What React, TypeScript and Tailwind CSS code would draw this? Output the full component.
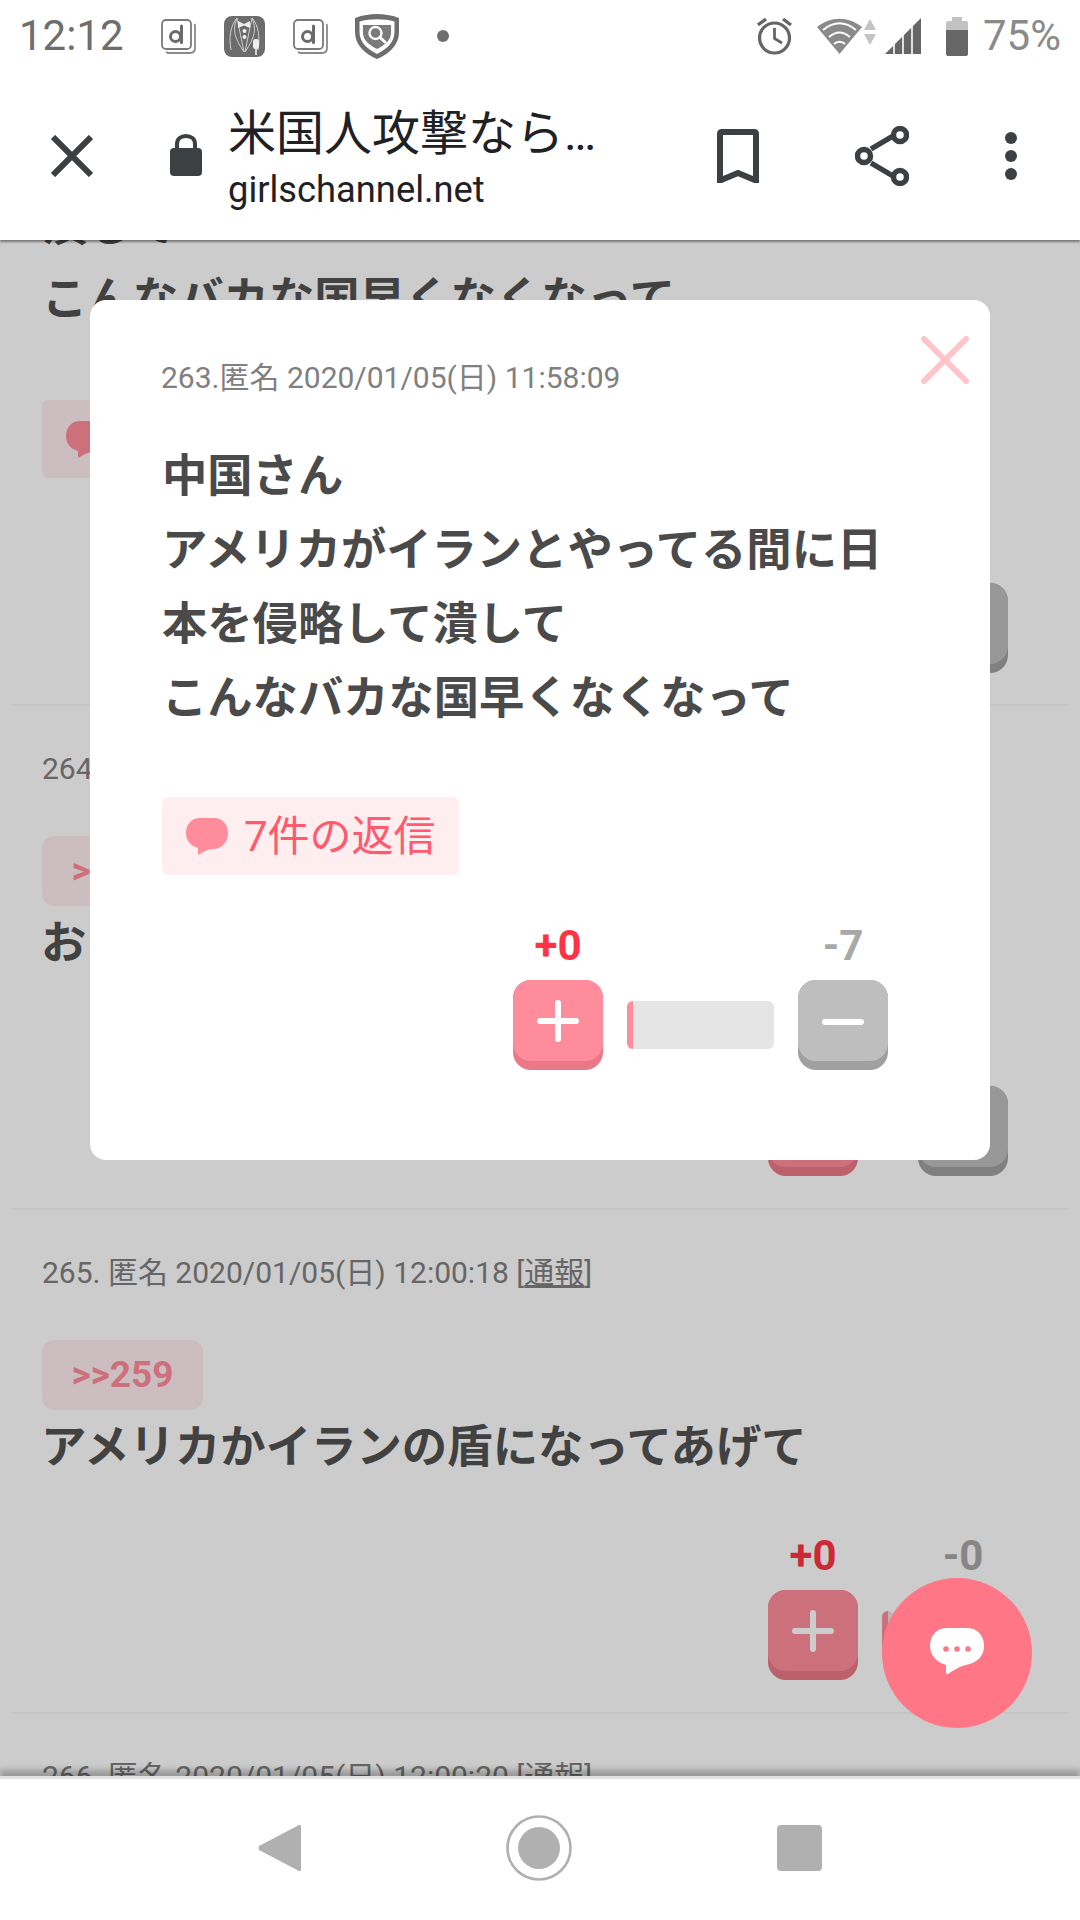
const FONT = "font-['Roboto','Noto_Sans_CJK_JP',sans-serif]";

function DIcon() {
  return (
    <svg width="35" height="35" viewBox="0 0 35 35" fill="none" className="shrink-0">
      <path d="M33.5 5Q34 6 34 8V29Q34 34 29 34H9Q6 34 5 33" stroke="#8a8a8a" strokeWidth="1.8" />
      <rect x="1" y="1" width="29" height="29" rx="4" fill="#fff" stroke="#7a7a7a" strokeWidth="1.8" />
      <circle cx="14.5" cy="17.5" r="5" stroke="#6a6a6a" strokeWidth="3" />
      <path d="M20.5 7V23.5" stroke="#6a6a6a" strokeWidth="3" strokeLinecap="round" />
    </svg>
  );
}

function TuxIcon() {
  return (
    <svg width="41" height="41" viewBox="0 0 41 41" fill="none" className="shrink-0">
      <rect width="41" height="41" rx="8" fill="#6c6c6c" />
      <path d="M13 2C6 10 5 22 7 34M28 2C35 10 36 22 34 34M13 2L20 36M28 2L21 36M13 2C9 12 9 20 20 36M28 2C32 12 32 20 21 36" stroke="#d8d8d8" strokeWidth="0.9" />
      <path d="M14 5L20 8L26 5V12L20 9.5L14 12Z" fill="#eee" />
      <circle cx="20.5" cy="15" r="2" fill="#eee" />
      <circle cx="20.5" cy="21" r="2" fill="#eee" />
      <rect x="29" y="23" width="6" height="10" rx="2.5" fill="#eee" />
      <path d="M32 33V39" stroke="#eee" strokeWidth="1.6" />
    </svg>
  );
}

function ShieldIcon() {
  return (
    <svg width="44" height="45" viewBox="0 0 44 45" fill="none" className="shrink-0">
      <path d="M22 0C29 0 36 1 44 4V18C44 31 34 40 22 45C10 40 0 31 0 18V4C8 1 15 0 22 0Z" fill="#6e6e6e" />
      <path d="M4.5 7.5C15 4.5 29 4.5 39.5 7.5V18C39.5 28 32 35 22 40C12 35 4.5 28 4.5 18Z" fill="#fff" />
      <path d="M8 11H36V19C36 26 30 31 22 35C14 31 8 26 8 19Z" fill="#7a7a7a" />
      <circle cx="20.5" cy="19" r="6" fill="#7a7a7a" stroke="#fff" strokeWidth="2.4" />
      <path d="M25 23.5L30 28" stroke="#fff" strokeWidth="3" strokeLinecap="round" />
    </svg>
  );
}

function StatusBar() {
  return (
    <div className="h-[72px] shrink-0 bg-white flex items-center pl-[19px] pr-[19px]">
      <span className="text-[42px] leading-none text-[#6e6e6e] w-[142px]">12:12</span>
      <DIcon />
      <div className="w-[28px]" />
      <TuxIcon />
      <div className="w-[28px]" />
      <DIcon />
      <div className="w-[27px]" />
      <ShieldIcon />
      <div className="w-[38px]" />
      <div className="w-[12px] h-[12px] rounded-full bg-[#6e6e6e]" />
      <div className="flex-1" />
      <svg width="35" height="38" viewBox="0 0 35 38" fill="none" className="shrink-0">
        <circle cx="17.5" cy="21" r="15" stroke="#666" strokeWidth="3.2" />
        <path d="M17.5 11V21.5L25 26" stroke="#666" strokeWidth="2.8" />
        <path d="M1 8L9 2M34 8L26 2" stroke="#666" strokeWidth="3.4" />
      </svg>
      <div className="w-[25px]" />
      <svg width="59" height="38" viewBox="0 0 59 38" className="shrink-0">
        <path d="M22.5 37L0 10C14 -1 31 -1 45 10Z" fill="#8a8a8a" />
        <path d="M6 13C17 4 28 4 39 13M12 20C19 14 26 14 33 20M17 27C20 24 25 24 28 27" stroke="#fff" strokeWidth="2" fill="none" />
        <path d="M53 2L59 13H47Z M53 28L47 17H59Z" fill="#c4c4c4" />
      </svg>
      <div className="w-[9px]" />
      <svg width="36" height="36" viewBox="0 0 36 36" className="shrink-0">
        <path d="M36 0V36H0Z" fill="#666" />
        <path d="M9 24V36M18 15V36M27 6V36" stroke="#fff" strokeWidth="1.6" />
      </svg>
      <div className="w-[25px]" />
      <svg width="22" height="39" viewBox="0 0 22 39" className="shrink-0">
        <path d="M6 0H16V4H20Q22 4 22 6V13H0V6Q0 4 2 4H6Z" fill="#c2c2c2" />
        <path d="M0 13H22V37Q22 39 20 39H2Q0 39 0 37Z" fill="#666" />
      </svg>
      <span className="text-[42px] leading-none text-[#8a8a8a] ml-[15px]">75%</span>
    </div>
  );
}

function Toolbar() {
  return (
    <div className="h-[168px] shrink-0 bg-white flex items-center relative z-20 shadow-[0_2px_2px_rgba(0,0,0,0.4)]">
      <svg width="42" height="42" viewBox="0 0 42 42" className="ml-[51px] shrink-0" fill="none">
        <path d="M2 2L40 40M40 2L2 40" stroke="#3c4043" strokeWidth="6" />
      </svg>
      <svg width="32" height="42" viewBox="0 0 32 42" className="ml-[77px] shrink-0 mt-[-2px]">
        <path d="M7 15V10C7 5 11 2 16 2C21 2 25 5 25 10V15" fill="none" stroke="#3c4043" strokeWidth="4" />
        <rect y="14" width="32" height="28" rx="4" fill="#3c4043" />
      </svg>
      <div className="ml-[26px] w-[421px] flex flex-col mt-[4px]">
        <span className="text-[48px] leading-[60px] text-[#202124] whitespace-nowrap">米国人攻撃なら…</span>
        <span className="text-[36.3px] leading-[44px] text-[#202124] mt-[4px]">girlschannel.net</span>
      </div>
      <svg width="42" height="54" viewBox="0 0 42 54" className="ml-[68px] shrink-0 mt-[-1px]" fill="none">
        <path d="M3 51.5V5Q3 3 5 3H37Q39 3 39 5V51.5L21 44Z" stroke="#3c4043" strokeWidth="6" />
      </svg>
      <svg width="54" height="60" viewBox="0 0 54 60" className="ml-[96px] shrink-0" fill="none" stroke="#3c4043" strokeWidth="5.5">
        <path d="M16 23L38 10M16 37L38 50" />
        <circle cx="9" cy="30" r="6.5" />
        <circle cx="45" cy="9" r="6.5" />
        <circle cx="45" cy="51" r="6.5" />
      </svg>
      <div className="ml-[96px] flex flex-col gap-[6px] shrink-0">
        <div className="w-[12px] h-[12px] rounded-full bg-[#3c4043]" />
        <div className="w-[12px] h-[12px] rounded-full bg-[#3c4043]" />
        <div className="w-[12px] h-[12px] rounded-full bg-[#3c4043]" />
      </div>
    </div>
  );
}

function Bubble({ fill, size = 42 }: { fill: string; size?: number }) {
  return (
    <svg width={size} height={Math.round((size * 37) / 42)} viewBox="0 0 42 37" className="shrink-0">
      <path d="M14 0H28C36 0 42 6 42 15C42 24 36 31 27 31C23 31 18 33 13 36.5C12 37 12 36 12 33V30C5 28 0 23 0 15C0 6 6 0 14 0Z" fill={fill} />
    </svg>
  );
}

function Votes({ plus, minus, fill, bar }: { plus: string; minus: string; fill: number; bar: number }) {
  return (
    <div className="flex items-end justify-end gap-[24px] font-bold">
      <div className="flex flex-col items-center">
        <span className="text-[42px] leading-[44px] text-[#ff3344]">{plus}</span>
        <div className="mt-[12px] w-[90px] h-[90px] rounded-[18px] bg-[#eb7886]">
          <div className="h-[81px] rounded-[18px] bg-[#ff8c9a] flex items-center justify-center">
            <svg width="42" height="42" viewBox="0 0 42 42" stroke="#fff" strokeWidth="6" strokeLinecap="round">
              <path d="M3 21H39M21 3V39" />
            </svg>
          </div>
        </div>
      </div>
      <div className="mb-[21px] h-[48px] rounded-[6px] bg-[#e5e5e5] overflow-hidden" style={{ width: bar }}>
        <div className="h-full bg-[#ff8c9a]" style={{ width: fill }} />
      </div>
      <div className="flex flex-col items-center">
        <span className="text-[42px] leading-[44px] text-[#a8a8a8]">{minus}</span>
        <div className="mt-[12px] w-[90px] h-[90px] rounded-[18px] bg-[#a0a0a0]">
          <div className="h-[81px] rounded-[18px] bg-[#bebebe] flex items-center justify-center">
            <svg width="42" height="8" viewBox="0 0 42 8" stroke="#fff" strokeWidth="6" strokeLinecap="round" className="mt-[3px]">
              <path d="M3 4H39" />
            </svg>
          </div>
        </div>
      </div>
    </div>
  );
}

function Comment({ meta, anchor, text }: { meta: string; anchor: string; text: string }) {
  return (
    <div className="h-[504px] mx-[12px] px-[30px] pt-[43px] border-b-[2px] border-[#f5f5f5]">
      <div className="text-[30px] leading-[40px] text-[#808080] whitespace-nowrap">
        {meta} [<span className="underline">通報</span>]
      </div>
      <div className="mt-[47px] w-[161px] h-[70px] rounded-[12px] bg-[#ffeef0] flex items-center justify-center text-[37px] font-bold text-[#ff8c9a]">
        {anchor}
      </div>
      <div className="mt-[1px] -ml-[1px] h-[74px] text-[45.4px] leading-[74px] font-bold text-[#525252] whitespace-nowrap">{text}</div>
      <div className="mt-[49px] pr-[30px]">
        <Votes plus="+0" minus="-0" fill={6} bar={12} />
      </div>
    </div>
  );
}

function PageBehind() {
  return (
    <div className="bg-white -mt-[51px]">
      <div className="h-[517px] mx-[12px] px-[30px] border-b-[2px] border-[#f5f5f5]">
        <div className="text-[45.4px] leading-[74px] font-bold text-[#525252] whitespace-nowrap">潰して</div>
        <div className="text-[45.4px] leading-[74px] font-bold text-[#525252] whitespace-nowrap">こんなバカな国早くなくなって</div>
        <div className="mt-[63px] w-[297px] h-[78px] rounded-[6px] bg-[#ffeef0] flex items-center gap-[16px] pl-[24px] text-[42px] text-[#ff5a6e]">
          <Bubble fill="#ff8c9a" />
          7件の返信
        </div>
        <div className="mt-[49px] pr-[30px]">
          <Votes plus="+0" minus="-7" fill={6} bar={12} />
        </div>
      </div>
      <Comment meta="264. 匿名 2020/01/05(日) 11:59:40" anchor=">>263" text="おいおいこの人ヤバいよ" />
      <Comment meta="265. 匿名 2020/01/05(日) 12:00:18" anchor=">>259" text="アメリカかイランの盾になってあげて" />
      <Comment meta="266. 匿名 2020/01/05(日) 12:00:20" anchor=">>263" text="" />
    </div>
  );
}

function Modal() {
  return (
    <div className="relative w-[900px] h-[860px] bg-white rounded-[16px] pt-[58px] pl-[72px] pr-[102px]">
      <svg width="48" height="48" viewBox="0 0 48 48" className="absolute top-[36px] right-[21px]" stroke="#ffc4ca" strokeWidth="6" strokeLinecap="round">
        <path d="M3 3L45 45M45 3L3 45" />
      </svg>
      <div className="-ml-[1px] text-[30px] leading-[40px] text-[#808080] whitespace-nowrap">263.匿名 2020/01/05(日) 11:58:09</div>
      <div className="mt-[42px] text-[45.3px] leading-[74px] font-bold text-[#4a4a4a] whitespace-nowrap">
        中国さん
        <br />
        アメリカがイランとやってる間に日
        <br />
        本を侵略して潰して
        <br />
        こんなバカな国早くなくなって
      </div>
      <div className="mt-[61px] w-[297px] h-[78px] rounded-[6px] bg-[#ffeef0] flex items-center gap-[16px] pl-[24px] text-[42px] text-[#ff5a6e]">
        <Bubble fill="#ff8c9a" />
        7件の返信
      </div>
      <div className="mt-[49px]">
        <Votes plus="+0" minus="-7" fill={6} bar={147} />
      </div>
    </div>
  );
}

function Fab() {
  return (
    <div className="absolute left-[882px] top-[1338px] w-[150px] h-[150px] rounded-full bg-[#ff7686] flex items-center justify-center z-10">
      <svg width="54" height="47" viewBox="0 0 54 47" className="-mt-[4px]">
        <path d="M17 0H37C47 0 54 7 54 18C54 29 46 35 36 37C30 38 24 42 18 46C16 47 16 45 16 41V37C6 34 0 27 0 18C0 7 7 0 17 0Z" fill="#fff" />
        <circle cx="16" cy="21" r="2.8" fill="#ff7686" />
        <circle cx="27" cy="21" r="2.8" fill="#ff7686" />
        <circle cx="38" cy="21" r="2.8" fill="#ff7686" />
      </svg>
    </div>
  );
}

function NavBar() {
  return (
    <div className="h-[144px] shrink-0 bg-white border-t-[3px] border-[#e2e2e2] relative flex items-center justify-center gap-[205px] pb-[3px] z-20 shadow-[0_-6px_6px_rgba(0,0,0,0.25)]">
      <svg width="43" height="48" viewBox="0 0 43 48">
        <path d="M41 1Q43 0 43 3V45Q43 48 41 47L1 26Q0 24 1 22Z" fill="#b0b0b0" />
      </svg>
      <svg width="66" height="66" viewBox="0 0 66 66" fill="none">
        <circle cx="33" cy="33" r="31.5" stroke="#b0b0b0" strokeWidth="2.6" />
        <circle cx="33" cy="33" r="21" fill="#b0b0b0" />
      </svg>
      <div className="w-[45px] h-[46px] rounded-[4px] bg-[#b0b0b0]" />
    </div>
  );
}

export default function App() {
  return (
    <div className={`w-[1080px] h-[1920px] flex flex-col overflow-hidden bg-white ${FONT}`}>
      <StatusBar />
      <Toolbar />
      <div className="relative flex-1 overflow-hidden">
        <PageBehind />
        <div className="absolute inset-0 bg-black/20 flex justify-center items-start pt-[60px]">
          <Modal />
        </div>
        <Fab />
      </div>
      <NavBar />
    </div>
  );
}
